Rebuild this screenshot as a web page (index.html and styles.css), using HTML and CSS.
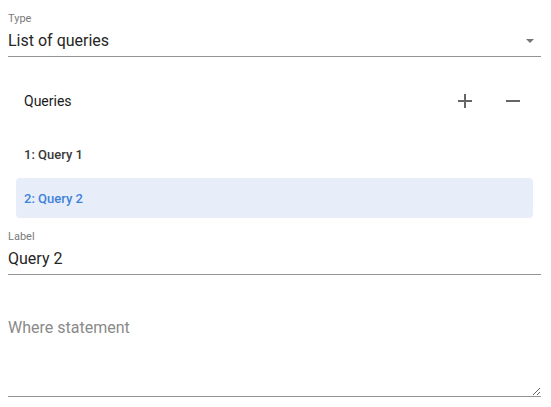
FILE: index.html
```html
<!DOCTYPE html>
<html>
<head>
<meta charset="utf-8">
<link rel="stylesheet" href="styles.css">
</head>
<body>
<div class="form">
  <div class="field">
    <div class="field-label">Type</div>
    <div class="field-value select">
      <span class="value-text">List of queries</span>
      <span class="arrow"></span>
    </div>
  </div>

  <div class="panel">
    <div class="panel-header">
      <span class="panel-title">Queries</span>
      <div class="actions">
        <button class="icon-btn" aria-label="Add">
          <svg width="14" height="14" viewBox="0 0 14 14"><path d="M7 0v14M0 7h14" stroke="#666" stroke-width="2" fill="none"/></svg>
        </button>
        <button class="icon-btn" aria-label="Remove">
          <svg width="14" height="14" viewBox="0 0 14 14"><path d="M0 7h14" stroke="#666" stroke-width="2" fill="none"/></svg>
        </button>
      </div>
    </div>
    <ul class="list">
      <li class="item">1: Query 1</li>
      <li class="item selected">2: Query 2</li>
    </ul>
  </div>

  <div class="field label-field">
    <div class="field-label">Label</div>
    <div class="field-value"><span class="value-text">Query 2</span></div>
  </div>

  <div class="field area-field">
    <textarea class="area" placeholder="Where statement"></textarea>
  </div>
</div>
</body>
</html>
```
FILE: styles.css
```css
html, body {
  margin: 0;
  padding: 0;
  background: #fff;
}
body {
  padding: 8px;
  font-family: Roboto, "Liberation Sans", sans-serif;
  color: #212121;
}
.form {
  width: 533px;
  display: flex;
  flex-direction: column;
}
.field {
  padding-top: 4px;
}
.field-label {
  font-size: 11px;
  line-height: 13px;
  color: #7a7a7a;
}
.field-value {
  margin-top: 4px;
  padding-bottom: 3px;
  border-bottom: 1px solid #949494;
  font-size: 16px;
  line-height: 24px;
  color: #262626;
  display: flex;
  align-items: center;
}
.value-text {
  flex: 1;
}
.arrow {
  width: 0;
  height: 0;
  border-left: 4px solid transparent;
  border-right: 4px solid transparent;
  border-top: 4px solid #757575;
  margin-right: 7px;
}
.panel {
  margin-top: 24px;
  padding: 0 8px;
}
.panel-header {
  height: 40px;
  display: flex;
  align-items: center;
  padding-left: 8px;
}
.panel-title {
  flex: 1;
  font-size: 14px;
  color: #1a1a1a;
}
.actions {
  display: flex;
  gap: 8px;
}
.icon-btn {
  width: 40px;
  height: 40px;
  border: none;
  background: transparent;
  padding: 0;
  display: flex;
  align-items: center;
  justify-content: center;
}
.list {
  list-style: none;
  margin: 13px 0 0;
  padding: 0;
  display: flex;
  flex-direction: column;
  gap: 4px;
}
.item {
  height: 40px;
  display: flex;
  align-items: center;
  padding-left: 8px;
  font-size: 13px;
  font-weight: 500;
  color: #3a3a3a;
  border-radius: 4px;
}
.item.selected {
  background: #e7eef9;
  color: #4082d9;
}
.label-field {
  margin-top: 8px;
}
.area-field {
  margin-top: 8px;
  padding-top: 21px;
}
.area {
  display: block;
  width: 100%;
  box-sizing: border-box;
  height: 93px;
  border: none;
  border-bottom: 1px solid #949494;
  padding: 12px 0 0;
  margin: 0;
  font-family: Roboto, "Liberation Sans", sans-serif;
  font-size: 16px;
  line-height: 24px;
  color: #222;
  resize: vertical;
  outline: none;
  background: transparent;
}
.area::placeholder {
  color: #8a8a8a;
}
```
